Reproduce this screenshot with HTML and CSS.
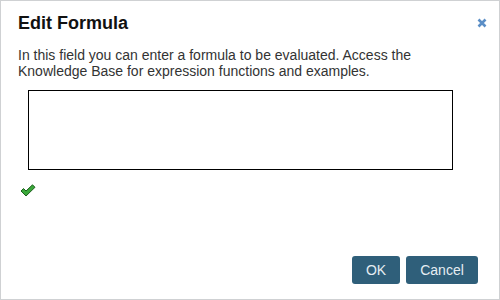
FILE: index.html
```html
<!DOCTYPE html>
<html>
<head>
<meta charset="utf-8">
<link rel="stylesheet" href="styles.css">
</head>
<body>
<div class="dialog">
  <div class="header">
    <h1 class="title">Edit Formula</h1>
    <svg class="close" width="10" height="10" viewBox="0 0 10 10"><path d="M1.5 1.5 L8.5 8.5 M8.5 1.5 L1.5 8.5" stroke="#5b8ec6" stroke-width="2.6" stroke-linecap="butt"/></svg>
  </div>
  <p class="desc">In this field you can enter a formula to be evaluated. Access the Knowledge Base for expression functions and examples.</p>
  <textarea class="formula"></textarea>
  <svg class="check" width="16" height="13" viewBox="0 0 16 13"><path d="M1 7 L3.5 4.5 L6 7 L12.5 0.8 L15 3.3 L6 12 Z" fill="#3aa83a" stroke="#1d5e1d" stroke-width="1" stroke-linejoin="round"/></svg>
  <div class="actions">
    <button class="btn">OK</button>
    <button class="btn">Cancel</button>
  </div>
</div>
</body>
</html>
```
FILE: styles.css
```css
html, body {
  margin: 0;
  padding: 0;
  background: #fff;
}
.dialog {
  width: 500px;
  height: 300px;
  box-sizing: border-box;
  border: 1px solid #cfd1d3;
  padding: 11px 21px 15px 17px;
  display: flex;
  flex-direction: column;
  font-family: "Liberation Sans", Arial, sans-serif;
  color: #222;
}
.header {
  display: flex;
  justify-content: space-between;
  align-items: flex-start;
}
.title {
  margin: 0;
  font-size: 18px;
  line-height: 22px;
  font-weight: bold;
  color: #111;
}
.close {
  margin-top: 6px;
  margin-right: -9px;
}
.desc {
  margin: 13px 0 0 0;
  max-width: 440px;
  font-size: 14px;
  line-height: 16px;
  color: #333;
}
.formula {
  display: block;
  margin: 11px 0 0 10px;
  width: 425px;
  height: 80px;
  box-sizing: border-box;
  border: 1px solid #000;
  resize: none;
  padding: 0;
  outline: none;
}
.check {
  margin: 14px 0 0 2px;
  display: block;
}
.actions {
  margin-top: auto;
  display: flex;
  justify-content: flex-end;
  gap: 6px;
}
.btn {
  height: 28px;
  padding: 0 12px;
  background: #2f5f7a;
  color: #e6edf2;
  border: none;
  border-radius: 3px;
  font-family: "Liberation Sans", Arial, sans-serif;
  font-size: 14px;
}
.btn:first-child {
  width: 48px;
}
.btn:last-child {
  width: 72px;
}
```
